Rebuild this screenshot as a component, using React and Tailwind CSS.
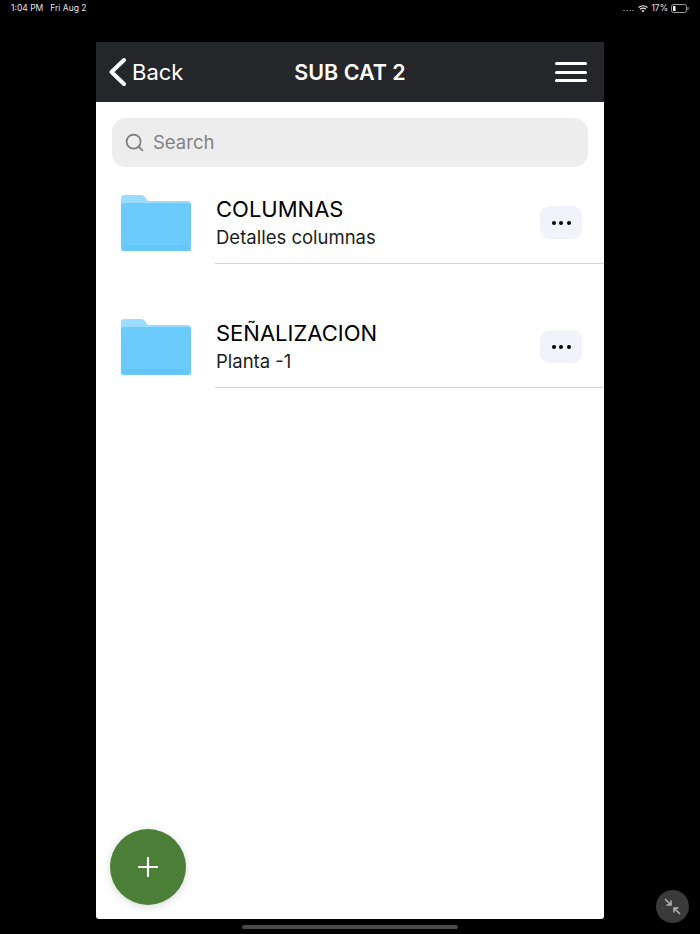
import React from 'react';
import { Search } from 'lucide-react';

const ITEMS = [
  { title: 'COLUMNAS', subtitle: 'Detalles columnas' },
  { title: 'SEÑALIZACION', subtitle: 'Planta -1' }
];

const FolderIcon = () => (
  <svg width="72" height="57" viewBox="0 0 72 57" className="shrink-0">
    <path d="M1 3 Q1 0 4 0 H21 Q24 0 25.500 2.500 L27 5 Q28 6 30 6 H68 Q71 6 71 9 V20 H1 Z" fill="#9bdcff" />
    <path d="M1 11 Q1 8 4 8 H68 Q71 8 71 11 V54 Q71 56 69 56 H3 Q1 56 1 54 Z" fill="#6acbfc" />
    <path d="M3 50 H69 V54 Q69 55 68 55 H4 Q3 55 3 54 Z" fill="#65c6f8" />
  </svg>
);

const FolderRow = ({ title, subtitle }) => (
  <div className="flex h-[124px] pl-[24px]">
    <div className="pt-[12px]">
      <FolderIcon />
    </div>
    <div className="ml-[23px] flex-1 h-[81px] border-b border-[#d4d4d4] flex items-start justify-between pt-[11px] pr-[22px]">
      <div className="flex flex-col pl-[1px]">
        <span className="text-[22px] leading-[30px] text-black">{title}</span>
        <span className="text-[18.500px] leading-[27px] text-[#1c1c1c]">{subtitle}</span>
      </div>
      <button className="mt-[12px] w-[42px] h-[33px] rounded-[9px] bg-[#f2f3f8] flex items-center justify-center gap-[3.500px]">
        <span className="w-[4px] h-[4px] rounded-full bg-black"></span>
        <span className="w-[4px] h-[4px] rounded-full bg-black"></span>
        <span className="w-[4px] h-[4px] rounded-full bg-black"></span>
      </button>
    </div>
  </div>
);

export default function App() {
  return (
    <div className="relative h-[934px] w-[700px] overflow-hidden bg-black font-['Inter',sans-serif]">
      {/* status bar */}
      <div className="h-[42px] flex items-start justify-between pl-[11px] pr-[11px] pt-[3px] text-[8.500px] leading-[11px] text-[#e5e5e5]">
        <div className="flex gap-[7px]">
          <span>1:04 PM</span>
          <span>Fri Aug 2</span>
        </div>
        <div className="flex items-center gap-[3px]">
          <div className="flex gap-[1px] mr-[1px] mt-[3px]">
            <span className="w-[2px] h-[1px] bg-[#666]"></span>
            <span className="w-[2px] h-[1px] bg-[#666]"></span>
            <span className="w-[2px] h-[1px] bg-[#666]"></span>
            <span className="w-[2px] h-[1px] bg-[#666]"></span>
          </div>
          <svg width="10" height="8" viewBox="0 0 10 8">
            <path d="M0.500 2.500 Q5 -1 9.500 2.500 M2 4.200 Q5 2 8 4.200" fill="none" stroke="#e5e5e5" strokeWidth="1.200" />
            <path d="M3.500 5.500 Q5 4.500 6.500 5.500 L5 7.500 Z" fill="#e5e5e5" />
          </svg>
          <span>17%</span>
          <svg width="18" height="9" viewBox="0 0 18 9">
            <rect x="0.500" y="0.500" width="15" height="8" rx="2" fill="none" stroke="#999" />
            <rect x="2" y="2" width="2.500" height="5" fill="#fff" />
            <rect x="16.500" y="3" width="1" height="3" fill="#999" />
          </svg>
        </div>
      </div>

      {/* app window */}
      <div className="relative mx-[96px] w-[508px] h-[877px] bg-white rounded-b-[3px] overflow-hidden flex flex-col">
        <div className="h-[60px] shrink-0 bg-[#25262a] flex items-center justify-between pl-[12px] pr-[17px] relative text-white">
          <div className="flex items-center gap-[5px]">
            <svg width="19" height="30" viewBox="0 0 19 30">
              <path d="M16 3 L3.500 15 L16 27" fill="none" stroke="#fff" strokeWidth="4" strokeLinecap="round" strokeLinejoin="round" />
            </svg>
            <span className="text-[22px] leading-[30px] mb-[1px]">Back</span>
          </div>
          <span className="absolute left-0 right-0 text-center text-[21.500px] font-semibold pointer-events-none">SUB CAT 2</span>
          <div className="flex flex-col gap-[5.500px]">
            <span className="block w-[32px] h-[3px] rounded-full bg-white"></span>
            <span className="block w-[32px] h-[3px] rounded-full bg-white"></span>
            <span className="block w-[32px] h-[3px] rounded-full bg-white"></span>
          </div>
        </div>

        <div className="px-[16px] pt-[16px] pb-[16px]">
          <div className="h-[49px] rounded-[14px] bg-[#ededed] flex items-center pl-[12px] gap-[8px]">
            <Search size={21} strokeWidth={1.900} color="#7c7c7c" />
            <span className="text-[18.500px] text-[#828282] pt-[1px]">Search</span>
          </div>
        </div>

        <div className="flex flex-col">
          {ITEMS.map((item) => (
            <FolderRow key={item.title} title={item.title} subtitle={item.subtitle} />
          ))}
        </div>

        {/* add button */}
        <button className="absolute left-[13.500px] bottom-[14px] w-[76px] h-[76px] rounded-full bg-[#4b7f38] shadow-[0_2px_10px_rgba(0,0,0,0.15)] flex items-center justify-center">
          <svg width="20" height="20" viewBox="0 0 20 20">
            <path d="M10 1 V19 M1 10 H19" stroke="#fff" strokeWidth="2.200" strokeLinecap="round" />
          </svg>
        </button>
      </div>

      {/* home indicator */}
      <div className="absolute left-[242px] top-[925px] w-[216px] h-[4px] rounded-full bg-[#4a4a4a]"></div>

      {/* collapse button */}
      <div className="absolute left-[656px] top-[890px] w-[33px] h-[33px] rounded-full bg-[#3a3a3a] flex items-center justify-center">
        <svg width="17" height="17" viewBox="0 0 17 17">
          <path d="M1 1 L7 7 M7 2.500 V7 H2.500 M16 16 L10 10 M10 14.500 V10 H14.500" fill="none" stroke="#b4b4b4" strokeWidth="1.500" />
        </svg>
      </div>
    </div>
  );
}
